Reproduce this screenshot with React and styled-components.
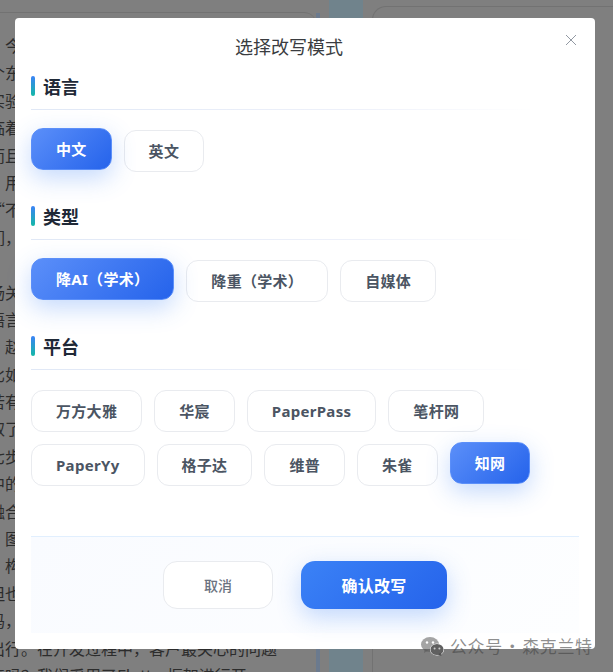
import React from "react";
import styled, { createGlobalStyle } from "styled-components";

const Global = createGlobalStyle`
  html, body { margin: 0; padding: 0; background: #7f7f7f; }
  * { box-sizing: border-box; }
  body { font-family: "Noto Sans", "Noto Sans CJK SC", sans-serif; }
`;

const Page = styled.div`
  position: relative;
  width: 613px;
  height: 672px;
  overflow: hidden;
  display: flex;
  background: #7f7f7f;
`;

const ArticleColumn = styled.div`
  width: 316px;
  flex: none;
  margin-top: 12px;
  padding-top: 19px;
  border-top: 1px solid #727272;
  border-top-right-radius: 12px;
`;

const ArticleLine = styled.div`
  height: 27.4px;
  line-height: 27.4px;
  margin-left: -11px;
  white-space: nowrap;
  font-size: 16px;
  color: #2c2c2c;
  font-family: "Noto Sans CJK SC", sans-serif;
`;

const Stripe = styled.div`
  width: 4px;
  flex: none;
  margin-top: 13px;
  margin-right: 9px;
  background: #6b7a8e;
`;

const BlueColumn = styled.div`
  width: 34px;
  flex: none;
  background: #70838c;
`;

const SidePanel = styled.div`
  flex: 1;
  margin: 6px 0 0 9px;
  border-top: 1px solid #727272;
  border-left: 1px solid #727272;
  border-top-left-radius: 14px;
`;

const Modal = styled.div`
  position: absolute;
  left: 15px;
  top: 18px;
  width: 580px;
  height: 631px;
  padding: 14px 16px 16px;
  background: #fff;
  border-radius: 4px;
  display: flex;
  flex-direction: column;
`;

const ModalTitle = styled.h2`
  margin: 0 0 16px;
  padding-right: 32px;
  text-align: center;
  font-size: 18px;
  line-height: 28px;
  font-weight: 400;
  color: #3a3c40;
  font-family: "Noto Sans CJK SC", sans-serif;
`;

const CloseButton = styled.button`
  position: absolute;
  top: 16px;
  right: 18px;
  width: 12px;
  height: 12px;
  padding: 0;
  border: 0;
  background: none;
  display: flex;
  color: #9299a3;
`;

const Section = styled.section`
  margin-bottom: 34px;
  &:last-of-type { margin-bottom: 0; }
`;

const SectionHead = styled.div`
  display: flex;
  align-items: center;
  gap: 8px;
  height: 20px;
`;

const Bar = styled.span`
  width: 4px;
  height: 20px;
  border-radius: 2px;
  background: linear-gradient(180deg, #3b82f6, #14b8a6);
`;

const SectionTitle = styled.h3`
  margin: 0;
  font-size: 18px;
  line-height: 20px;
  font-weight: 700;
  color: #1f2937;
  font-family: "Noto Sans CJK SC", sans-serif;
`;

const Divider = styled.div`
  height: 1px;
  margin: 13px 0 20px;
  background: linear-gradient(90deg, #e0e8f6 0%, #eef1fa 60%, rgba(255, 255, 255, 0) 92%);
`;

const Chips = styled.div`
  display: flex;
  flex-wrap: wrap;
  gap: 12px;
`;

const Chip = styled.button`
  height: 42px;
  padding: 0 24px;
  border-radius: 12px;
  border: 1px solid ${(p) => (p.$active ? "#5b8ff9" : "#e9ebef")};
  background: ${(p) => (p.$active ? "linear-gradient(135deg, #5b8ff9, #2563eb)" : "#fff")};
  color: ${(p) => (p.$active ? "#fff" : "#4b5563")};
  font-family: inherit;
  font-size: 15px;
  letter-spacing: 0.3px;
  line-height: 20px;
  font-weight: 700;
  white-space: nowrap;
  box-shadow: ${(p) => (p.$active ? "0 8px 25px rgba(59, 130, 246, 0.3)" : "none")};
  transform: ${(p) => (p.$active ? "translateY(-2px)" : "none")};
`;

const Footer = styled.div`
  margin-top: 50px;
  padding: 24px 0;
  display: flex;
  justify-content: center;
  gap: 28px;
  border-top: 1px solid #e1effe;
  background: linear-gradient(135deg, #f9fbff, #fdfeff);
`;

const CancelButton = styled.button`
  width: 110px;
  height: 48px;
  border-radius: 14px;
  border: 1px solid #e9ebef;
  background: #fff;
  color: #6b7280;
  font-family: "Noto Sans CJK SC", sans-serif;
  font-size: 14px;
  font-weight: 500;
`;

const ConfirmButton = styled.button`
  width: 146px;
  height: 48px;
  border-radius: 14px;
  border: 0;
  background: linear-gradient(135deg, #3b82f6, #2563eb);
  color: #fff;
  font-family: "Noto Sans CJK SC", sans-serif;
  font-size: 16px;
  letter-spacing: 0.3px;
  font-weight: 700;
  box-shadow: 0 8px 25px rgba(59, 130, 246, 0.3);
`;

const Watermark = styled.div`
  position: absolute;
  left: 421px;
  top: 636px;
  display: flex;
  align-items: center;
  gap: 6px;
  font-family: "Noto Sans CJK SC", sans-serif;
  font-size: 17px;
  line-height: 20px;
  letter-spacing: 0.6px;
  word-spacing: -3.5px;
  white-space: nowrap;
  color: rgba(68, 68, 68, 0.6);
`;

const WeChat = () => (
  <svg width="23" height="19" viewBox="0 0 23 19" aria-hidden="true">
    <ellipse cx="9" cy="7.5" rx="9" ry="7.5" fill="rgba(90,90,90,0.55)" />
    <path d="M3.5 12 L3 16 L7 13.5 Z" fill="rgba(90,90,90,0.55)" />
    <circle cx="6" cy="5.5" r="1.2" fill="#fff" />
    <circle cx="12" cy="5.5" r="1.2" fill="#fff" />
    <ellipse cx="16" cy="12.5" rx="7" ry="6" fill="#fff" />
    <ellipse cx="16" cy="12.5" rx="6.5" ry="5.5" fill="rgba(68,68,68,0.85)" />
    <path d="M19.5 16 L20.5 19 L17 17.5 Z" fill="rgba(68,68,68,0.85)" />
    <circle cx="13.6" cy="11.5" r="1" fill="#ccc" />
    <circle cx="18.4" cy="11.5" r="1" fill="#ccc" />
  </svg>
);

const article = [
  "\u3000今", "个东", "实验", "临着", "而且", "\u3000用", "“不", "们，", "\u00a0", "场关", "语言",
  "\u3000赵", "比如", "若有", "取了", "七步", "中的", "融合", "\u3000图", "\u3000构", "但也", "码，",
  "出行。在开发过程中，客户最关心的问题",
  "真吗？我们采用了Flutter框架进行开",
];

const groups = [
  { title: "语言", items: [{ label: "中文", active: true }, { label: "英文" }] },
  { title: "类型", items: [{ label: "降AI（学术）", active: true }, { label: "降重（学术）" }, { label: "自媒体" }] },
  {
    title: "平台",
    items: [
      { label: "万方大雅" }, { label: "华宸" }, { label: "PaperPass" }, { label: "笔杆网" },
      { label: "PaperYy" }, { label: "格子达" }, { label: "维普" }, { label: "朱雀" },
      { label: "知网", active: true },
    ],
  },
];

export default function App() {
  return (
    <>
      <Global />
      <Page>
        <ArticleColumn>
          {article.map((t, i) => <ArticleLine key={i}>{t}</ArticleLine>)}
        </ArticleColumn>
        <Stripe />
        <BlueColumn />
        <SidePanel />
        <Modal>
          <ModalTitle>选择改写模式</ModalTitle>
          <CloseButton aria-label="关闭">
            <svg width="12" height="12" viewBox="0 0 12 12" fill="none" stroke="currentColor" strokeWidth="1">
              <path d="M1 1 L11 11 M11 1 L1 11" />
            </svg>
          </CloseButton>
          {groups.map((g) => (
            <Section key={g.title}>
              <SectionHead>
                <Bar />
                <SectionTitle>{g.title}</SectionTitle>
              </SectionHead>
              <Divider />
              <Chips>
                {g.items.map((c) => <Chip key={c.label} $active={c.active}>{c.label}</Chip>)}
              </Chips>
            </Section>
          ))}
          <Footer>
            <CancelButton>取消</CancelButton>
            <ConfirmButton>确认改写</ConfirmButton>
          </Footer>
        </Modal>
        <Watermark>
          <WeChat />
          <span>公众号 · 森克兰特</span>
        </Watermark>
      </Page>
    </>
  );
}
